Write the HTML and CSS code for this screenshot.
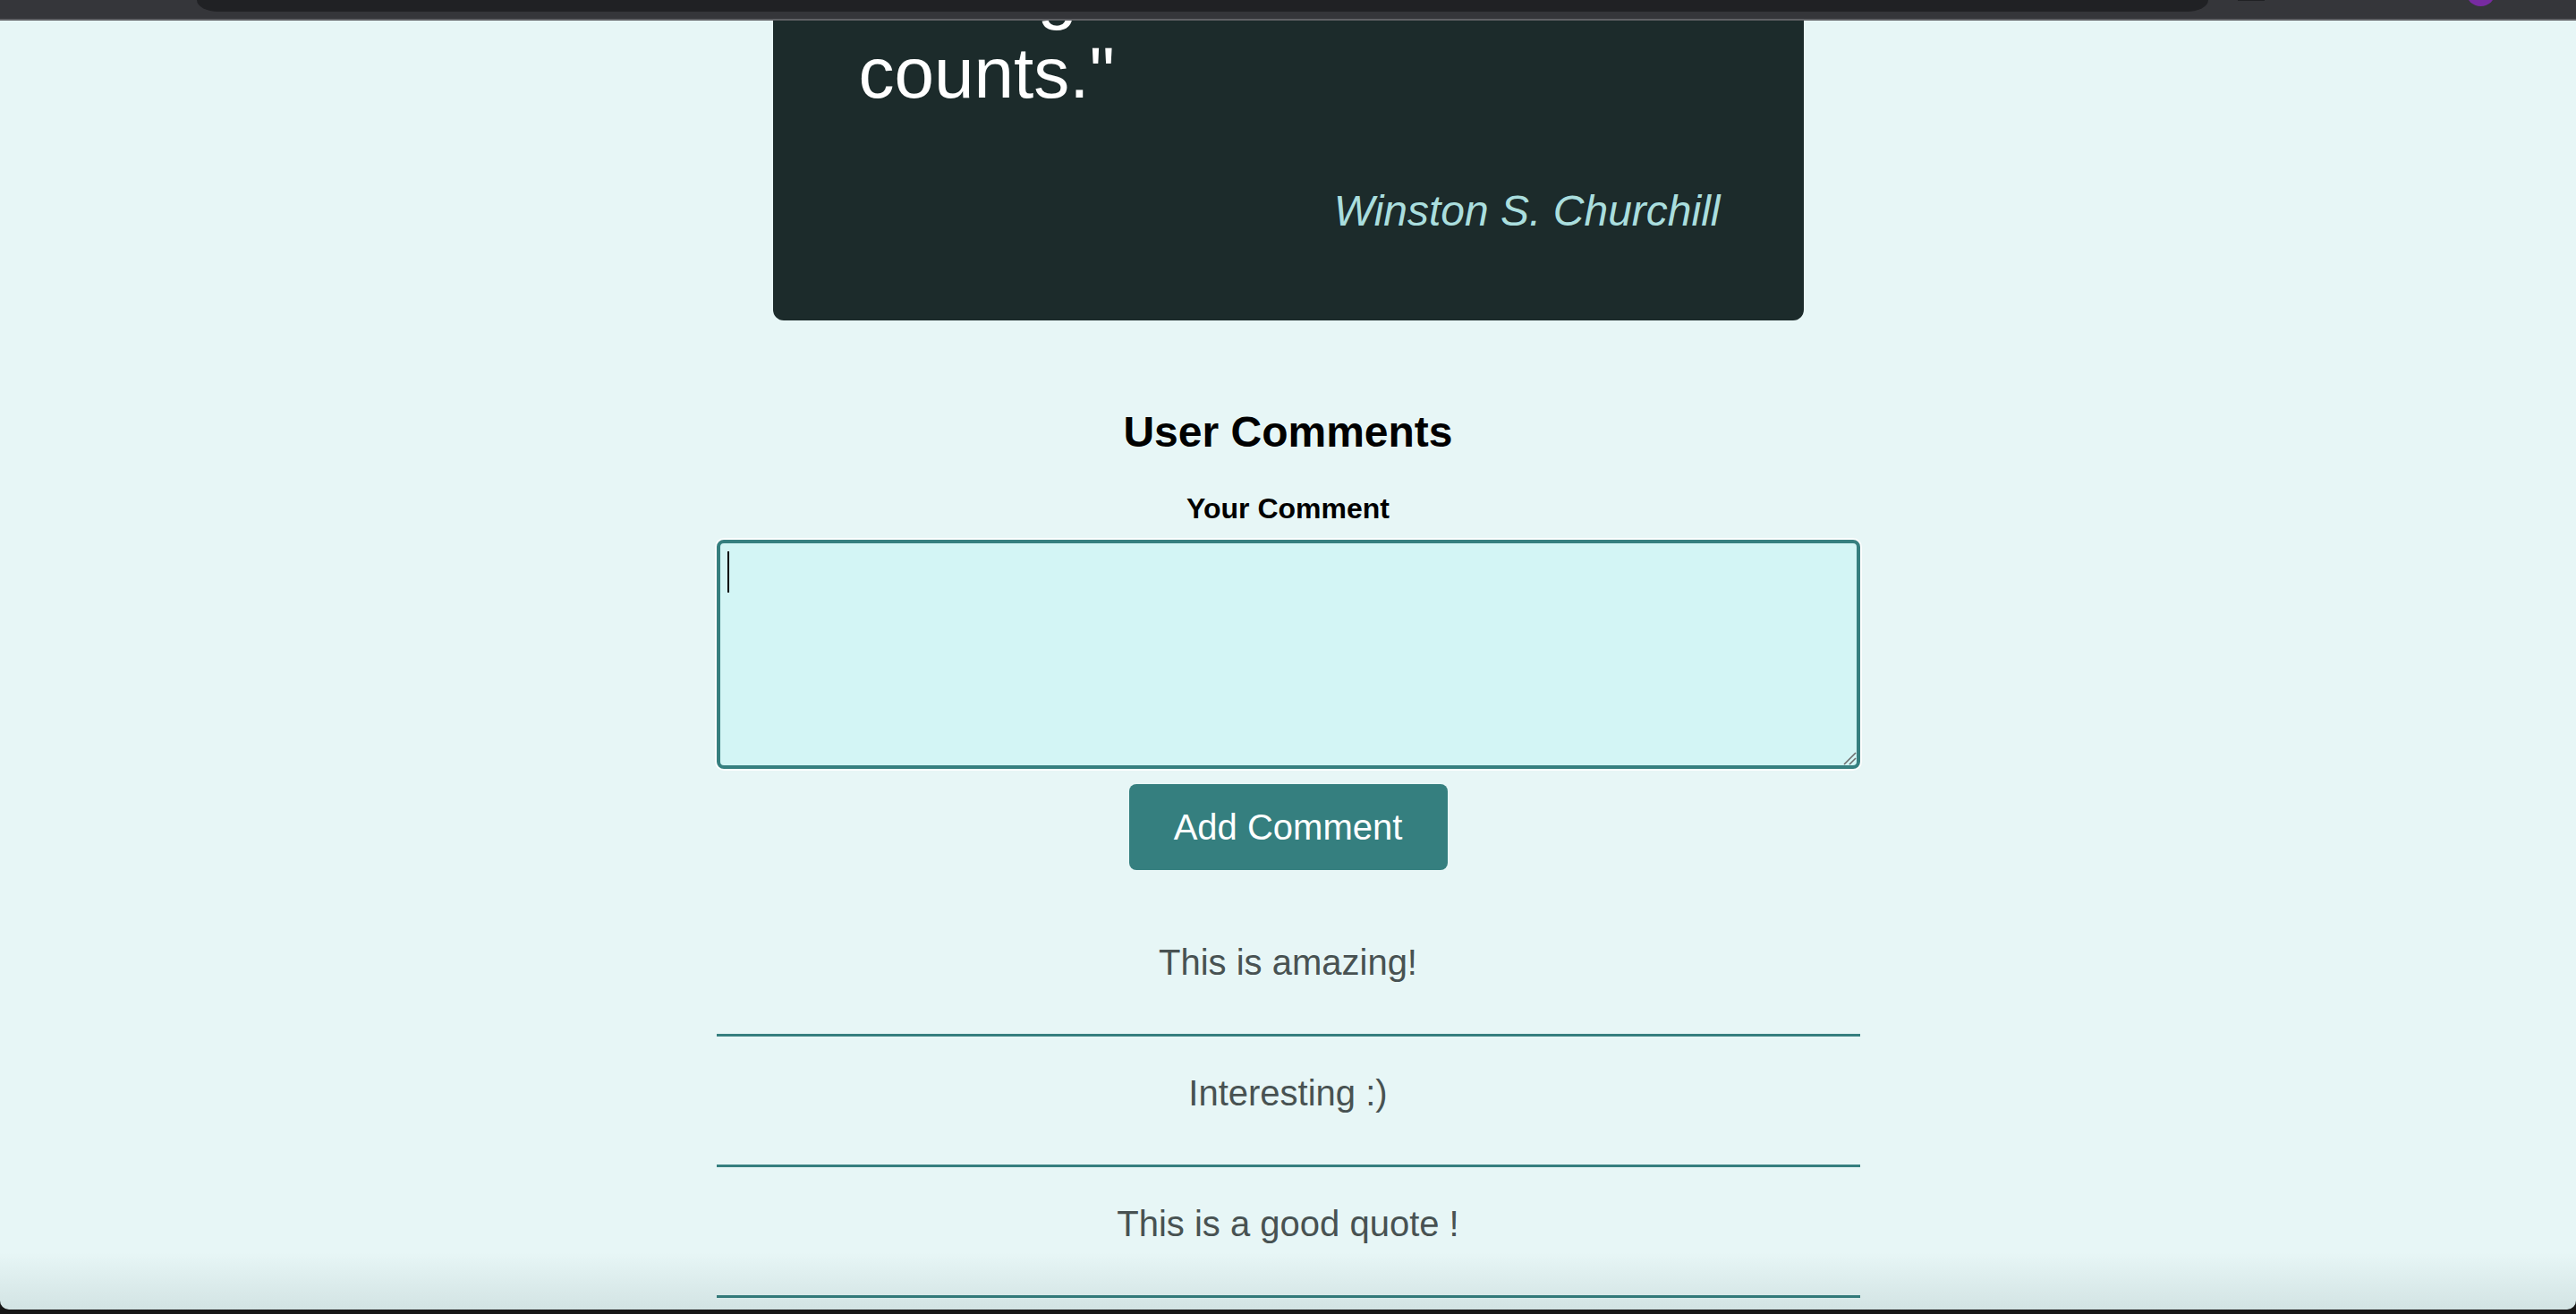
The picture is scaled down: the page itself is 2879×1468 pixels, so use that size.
FILE: index.html
```
<!DOCTYPE html>
<html lang="en">
<head>
<meta charset="utf-8">
<title>Quote</title>
<link rel="stylesheet" href="styles.css">
</head>
<body>
<div class="window">
  <header class="chrome">
    <div class="strip"></div>
    <span class="dash"></span>
    <span class="avatar"></span>
  </header>
  <main class="viewport">
    <div class="page">
      <section class="quote-card">
        <p class="quote-text">&quot;Success is not final, failure is not fatal: it is the courage to continue that counts.&quot;</p>
        <p class="quote-author">Winston S. Churchill</p>
      </section>
      <section class="comments">
        <h2 class="comments-title">User Comments</h2>
        <label class="comment-label" for="comment">Your Comment</label>
        <div class="field">
          <textarea id="comment" class="comment-input"></textarea>
          <span class="caret"></span>
          <svg class="grip" width="16" height="16" viewBox="0 0 16 16" aria-hidden="true">
            <line x1="15" y1="2" x2="2" y2="15" stroke="#6b6b6b" stroke-width="1.6"/>
            <line x1="15" y1="8" x2="8" y2="15" stroke="#6b6b6b" stroke-width="1.6"/>
          </svg>
        </div>
        <button class="add-btn" type="button">Add Comment</button>
        <ul class="comment-list">
          <li class="comment-item">This is amazing!</li>
          <li class="comment-item">Interesting :)</li>
          <li class="comment-item">This is a good quote !</li>
        </ul>
      </section>
    </div>
    <div class="bottom-shade"></div>
  </main>
</div>
</body>
</html>
```
FILE: styles.css
```
html, body {
  margin: 0;
  padding: 0;
  height: 100%;
}

body {
  background: #161616;
  font-family: "Liberation Sans", Arial, Helvetica, sans-serif;
  overflow: hidden;
}

.window {
  display: flex;
  flex-direction: column;
  height: 1463px;
}

/* browser chrome */
.chrome {
  display: flex;
  align-items: flex-start;
  height: 21px;
  background: #35363a;
  border-bottom: 2px solid #5f6064;
  overflow: hidden;
  flex: none;
}

.strip {
  flex: none;
  width: 2248px;
  height: 13px;
  margin-left: 220px;
  background: #202124;
  border-radius: 0 0 24px 24px / 0 0 13px 13px;
}

.dash {
  flex: none;
  width: 30px;
  height: 1px;
  margin-left: 33px;
  background: #202124;
}

.avatar {
  flex: none;
  width: 33px;
  height: 33px;
  margin-left: 225px;
  margin-top: -26px;
  border-radius: 50%;
  background: #772ba1;
}

/* page viewport */
.viewport {
  position: relative;
  flex: 1;
  overflow: hidden;
  background: #e7f6f6;
  border-radius: 0 0 10px 10px;
}

.page {
  display: flex;
  flex-direction: column;
  align-items: center;
  margin-top: -359px;
}

.quote-card {
  box-sizing: border-box;
  width: 1152px;
  padding: 96px 93px 95px 96px;
  background: #1c2b2b;
  border-radius: 12px;
}

.quote-text {
  margin: 0;
  color: #ffffff;
  font-size: 80px;
  line-height: 92px;
}

.quote-author {
  margin: 81px 0 0;
  color: #aadede;
  font-size: 48px;
  line-height: 54px;
  font-style: italic;
  text-align: right;
}

.comments {
  display: flex;
  flex-direction: column;
  align-items: center;
  width: 1278px;
}

.comments-title {
  margin: 97px 0 0;
  font-size: 48px;
  line-height: 56px;
  font-weight: 700;
  color: #000;
}

.comment-label {
  margin-top: 39px;
  font-size: 32px;
  line-height: 37px;
  font-weight: 700;
  color: #000;
}

.field {
  position: relative;
  margin-top: 16px;
  width: 100%;
  height: 256px;
}

.comment-input {
  display: block;
  box-sizing: border-box;
  width: 100%;
  height: 256px;
  margin: 0;
  padding: 9px 8px;
  border: 4px solid #367f7f;
  border-radius: 8px;
  background: #d3f5f5;
  font-family: "Liberation Sans", Arial, sans-serif;
  font-size: 40px;
  outline: none;
  resize: none;
  box-shadow: 0 0 0 2px rgba(255, 255, 255, 0.85);
}

.caret {
  position: absolute;
  left: 12px;
  top: 13px;
  width: 2px;
  height: 46px;
  background: #000;
}

.grip {
  position: absolute;
  right: 4px;
  bottom: 4px;
}

.add-btn {
  box-sizing: border-box;
  margin-top: 17px;
  width: 356px;
  height: 96px;
  border: none;
  border-radius: 8px;
  background: #357f7f;
  color: #ffffff;
  font-family: "Liberation Sans", Arial, sans-serif;
  font-size: 40px;
  line-height: 46px;
  padding: 0;
}

.comment-list {
  list-style: none;
  margin: 40px 0 0;
  padding: 0;
  width: 100%;
}

.comment-item {
  padding: 40px 0 57px;
  border-bottom: 3px solid #367f7f;
  text-align: center;
  font-size: 40px;
  line-height: 46px;
  color: #485252;
}

.bottom-shade {
  position: absolute;
  left: 0;
  right: 0;
  bottom: 0;
  height: 64px;
  background: linear-gradient(to bottom, rgba(0, 40, 40, 0), rgba(0, 40, 40, 0.09));
  pointer-events: none;
}
```
